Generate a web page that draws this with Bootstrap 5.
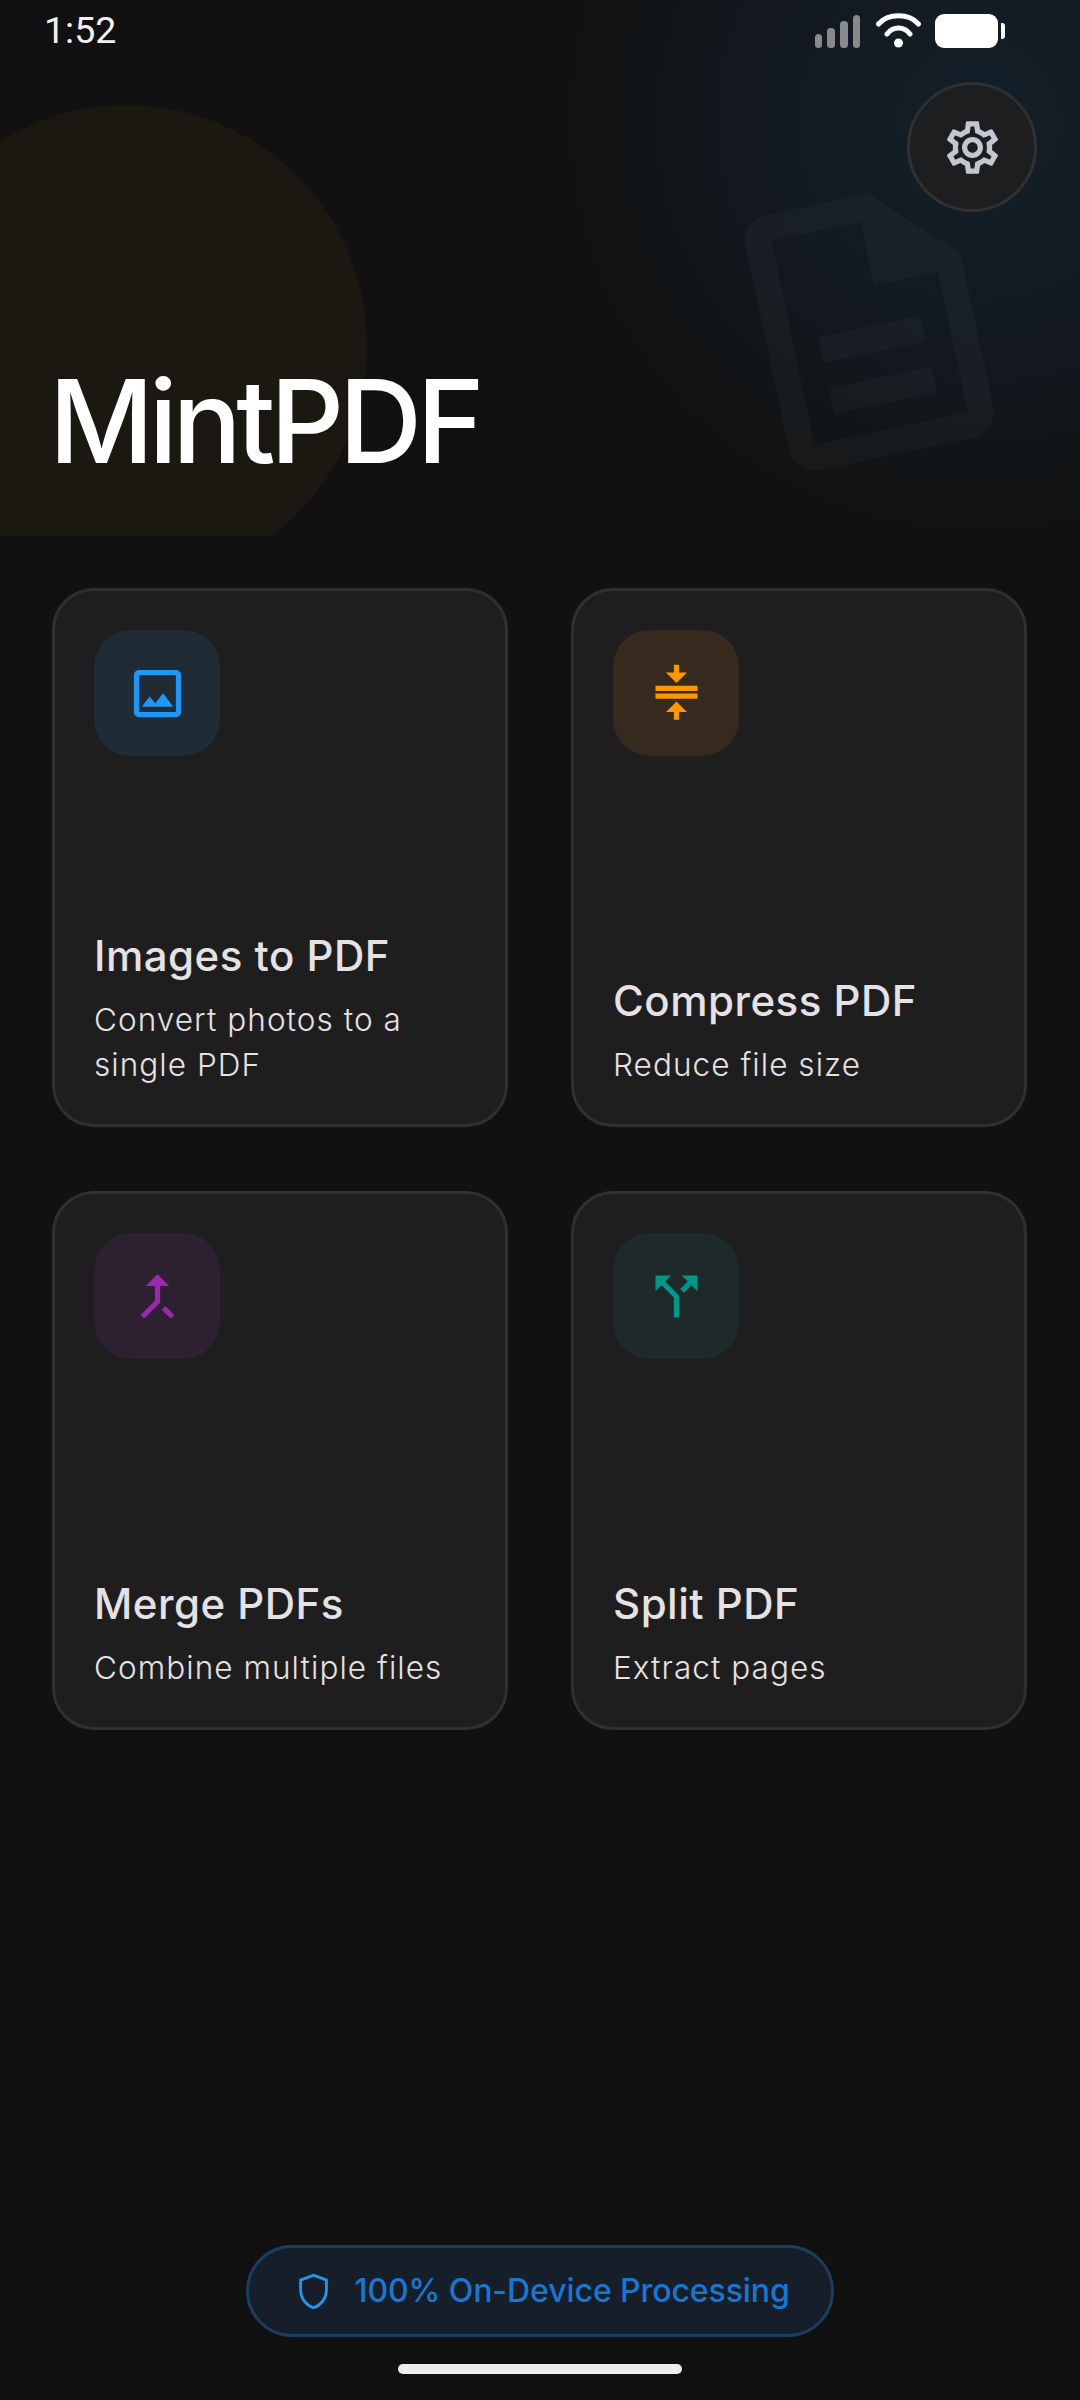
<!DOCTYPE html>
<html lang="en">
<head>
  <meta charset="UTF-8" />
  <title>MintPDF</title>
  <link href="https://cdn.jsdelivr.net/npm/bootstrap@5.3.2/dist/css/bootstrap.min.css" rel="stylesheet">
  <style>
    html, body {
      height: 100%;
      margin: 0;
      background-color: #111111;
      font-family: Inter, "Liberation Sans", sans-serif;
      color: #e6e1e5;
    }
    .screen {
      width: 1080px;
      height: 2400px;
      overflow: hidden;
    }
    .hero {
      position: relative;
      height: 536px;
      overflow: hidden;
    }
    /* background decorations */
    .hero-glow {
      position: absolute;
      left: 560px;
      top: -300px;
      width: 840px;
      height: 840px;
      border-radius: 50%;
      background: radial-gradient(circle closest-side, rgba(33,150,243,.11), rgba(33,150,243,.045) 70%, rgba(33,150,243,0));
    }
    .hero-blob {
      position: absolute;
      left: -113px;
      top: 105px;
      width: 480px;
      height: 480px;
      border-radius: 50%;
      background: rgba(255,193,7,.04);
    }
    .hero-doc {
      position: absolute;
      left: 713px;
      top: 170px;
      width: 313px;
      height: 313px;
      fill: #fff;
      opacity: .024;
      transform: rotate(-12deg);
    }
    .status-bar {
      position: relative;
      height: 82px;
      padding: 8px 75px 0 44px;
    }
    .status-time {
      font-family: Roboto, sans-serif;
      font-size: 37.5px;
      line-height: 44px;
      color: #f2f2f2;
    }
    .status-bar svg { margin-top: 1px; }
    .settings-row {
      position: relative;
      padding-right: 43px;
    }
    .settings-btn {
      width: 130px;
      height: 130px;
      padding: 0;
      background: #1c1e20;
      border: 3px solid #303030;
      border-radius: 50%;
    }
    .settings-btn svg { width: 63px; height: 63px; fill: #c4c7d0; }
    .app-title {
      position: relative;
      margin: 0 0 0 49px;
      padding-bottom: 44px;
      font-size: 115px;
      line-height: 140px;
      font-weight: 500;
      letter-spacing: -5.25px;
      color: #fff;
    }
    .tools {
      padding: 52px 53px 0 52px;
    }
    .tools .row {
      --bs-gutter-x: 63px;
      --bs-gutter-y: 64px;
    }
    .tool-card {
      height: 539px;
      padding: 39px 39px 37px;
      background: #1e1e1e;
      border: 3px solid #303030;
      border-radius: 42px;
    }
    .tool-icon {
      width: 126px;
      height: 126px;
      border-radius: 37px;
    }
    .tool-icon svg { width: 63px; height: 63px; fill: currentColor; }
    .tool-name {
      margin: 0 0 14px;
      font-size: 42px;
      line-height: 56px;
      font-weight: 500;
      letter-spacing: .5px;
      color: #e6e1e5;
    }
    .tool-desc {
      margin: 0;
      font-size: 31.5px;
      line-height: 44.500px;
      letter-spacing: 1.05px;
      font-weight: 300;
      color: #e6e1e5;
    }
    .icon-blue { background: #1f2b35; color: #2196f3; }
    .icon-orange { background: #362a1e; color: #ff9800; }
    .icon-purple { background: #2d2030; color: #9c27b0; }
    .icon-teal { background: #1e2a2a; color: #009688; }
    .privacy-pill {
      width: 588px;
      height: 92px;
      padding-left: 2px;
      background: #161f29;
      border: 3px solid #1a3e5c;
      font-size: 32px;
      font-weight: 500;
      letter-spacing: -.08px;
      color: #1976d2;
    }
    .privacy-pill svg {
      width: 43px;
      height: 43px;
      margin-right: 19px;
      fill: none;
      stroke: #2196f3;
      stroke-width: 1.6;
    }
    .home-bar {
      width: 284px;
      height: 10px;
      margin: 27px auto 26px;
      background: #eeeeee;
      border-radius: 5px;
    }
  </style>
</head>
<body>
  <div class="screen d-flex flex-column">
    <div class="hero d-flex flex-column">
      <div class="hero-glow"></div>
      <div class="hero-blob"></div>
      <svg class="hero-doc" viewBox="0 0 24 24"><path d="M8 16h8v2H8zm0-4h8v2H8zm6-10H6c-1.1 0-2 .9-2 2v16c0 1.1.89 2 1.99 2H18c1.1 0 2-.9 2-2V8l-6-6zm4 18H6V4h7v5h5v11z"/></svg>

      <div class="status-bar d-flex justify-content-between align-items-start">
        <span class="status-time">1:52</span>
        <svg width="190" height="50" viewBox="0 0 190 50">
          <g fill="#8a8a8a">
            <rect x="0" y="25" width="7" height="14" rx="3.5"/>
            <rect x="12" y="19" width="8" height="20" rx="3.5"/>
            <rect x="25" y="12" width="8" height="27" rx="3.5"/>
            <rect x="38" y="6" width="7" height="33" rx="3.5"/>
          </g>
          <g fill="none" stroke="#fff" stroke-width="5" stroke-linecap="round">
            <path d="M63.500 15 C73 4 94 4 103.500 15"/>
            <path d="M72 25 C78 17 89 17 95 25"/>
          </g>
          <circle cx="83.500" cy="34" r="4.500" fill="#fff"/>
          <rect x="120" y="5" width="63" height="34" rx="9" fill="#fff"/>
          <path d="M186 14h1c2 0 3 1 3 3v10c0 2-1 3-3 3h-1z" fill="#fff"/>
        </svg>
      </div>

      <div class="settings-row d-flex justify-content-end">
        <button class="settings-btn d-flex align-items-center justify-content-center" type="button" aria-label="Settings">
          <svg viewBox="0 0 24 24"><path d="M19.43 12.98c.04-.32.07-.64.07-.98 0-.34-.03-.66-.07-.98l2.11-1.65c.19-.15.24-.42.12-.64l-2-3.46c-.09-.16-.26-.25-.44-.25-.06 0-.12.01-.17.03l-2.49 1c-.52-.4-1.08-.73-1.69-.98l-.38-2.65C14.46 2.18 14.25 2 14 2h-4c-.25 0-.46.18-.49.42l-.38 2.65c-.61.25-1.17.59-1.69.98l-2.49-1c-.06-.02-.12-.03-.18-.03-.17 0-.34.09-.43.25l-2 3.46c-.13.22-.07.49.12.64l2.11 1.65c-.04.32-.07.65-.07.98 0 .33.03.66.07.98l-2.11 1.65c-.19.15-.24.42-.12.64l2 3.46c.09.16.26.25.44.25.06 0 .12-.01.17-.03l2.49-1c.52.4 1.08.73 1.69.98l.38 2.65c.03.24.24.42.49.42h4c.25 0 .46-.18.49-.42l.38-2.65c.61-.25 1.17-.59 1.69-.98l2.49 1c.06.02.12.03.18.03.17 0 .34-.09.43-.25l2-3.46c.12-.22.07-.49-.12-.64l-2.11-1.65zm-1.98-1.71c.04.31.05.52.05.73 0 .21-.02.43-.05.73l-.14 1.13.89.7 1.08.84-.7 1.21-1.27-.51-1.04-.42-.9.68c-.43.32-.84.56-1.25.73l-1.06.43-.16 1.13-.2 1.35h-1.4l-.19-1.35-.16-1.13-1.06-.43c-.43-.18-.83-.41-1.23-.71l-.91-.7-1.06.43-1.27.51-.7-1.21 1.08-.84.89-.7-.14-1.13c-.03-.31-.05-.54-.05-.74s.02-.43.05-.73l.14-1.13-.89-.7-1.08-.84.7-1.21 1.27.51 1.04.42.9-.68c.43-.32.84-.56 1.25-.73l1.06-.43.16-1.13.2-1.35h1.39l.19 1.35.16 1.13 1.06.43c.43.18.83.41 1.23.71l.91.7 1.06-.43 1.27-.51.7 1.21-1.07.85-.89.7.14 1.13zM12 8c-2.21 0-4 1.79-4 4s1.79 4 4 4 4-1.79 4-4-1.79-4-4-4zm0 6c-1.1 0-2-.9-2-2s.9-2 2-2 2 .9 2 2-.9 2-2 2z"/></svg>
        </button>
      </div>

      <h1 class="app-title mt-auto">MintPDF</h1>
    </div>

    <div class="tools">
      <div class="row">
        <div class="col-6">
          <div class="tool-card d-flex flex-column justify-content-between">
            <div class="tool-icon icon-blue d-flex align-items-center justify-content-center">
              <svg viewBox="0 0 24 24"><path d="M19 5v14H5V5h14m0-2H5c-1.1 0-2 .9-2 2v14c0 1.100.9 2 2 2h14c1.100 0 2-.9 2-2V5c0-1.100-.9-2-2-2zm-4.860 8.860l-3 3.870L9 13.140 6 17h12l-3.860-5.140z"/></svg>
            </div>
            <div>
              <h2 class="tool-name">Images to PDF</h2>
              <p class="tool-desc">Convert photos to a single PDF</p>
            </div>
          </div>
        </div>
        <div class="col-6">
          <div class="tool-card d-flex flex-column justify-content-between">
            <div class="tool-icon icon-orange d-flex align-items-center justify-content-center">
              <svg viewBox="0 0 24 24"><path d="M8 19h3v3h2v-3h3l-4-4-4 4zm8-15h-3V1h-2v3H8l4 4 4-4zM4 9v2h16V9H4zm0 3h16v2H4v-2z"/></svg>
            </div>
            <div>
              <h2 class="tool-name">Compress PDF</h2>
              <p class="tool-desc">Reduce file size</p>
            </div>
          </div>
        </div>
        <div class="col-6">
          <div class="tool-card d-flex flex-column justify-content-between">
            <div class="tool-icon icon-purple d-flex align-items-center justify-content-center">
              <svg viewBox="0 0 24 24"><path d="M17 20.410L18.410 19 15 15.590 13.590 17 17 20.410zM7.500 8H11v5.590L5.590 19 7 20.410l6-6V8h3.500L12 3.500 7.500 8z"/></svg>
            </div>
            <div>
              <h2 class="tool-name">Merge PDFs</h2>
              <p class="tool-desc">Combine multiple files</p>
            </div>
          </div>
        </div>
        <div class="col-6">
          <div class="tool-card d-flex flex-column justify-content-between">
            <div class="tool-icon icon-teal d-flex align-items-center justify-content-center">
              <svg viewBox="0 0 24 24"><path d="M14 4l2.290 2.290-2.880 2.880 1.420 1.420 2.880-2.880L20 10V4h-6zm-4 0H4v6l2.290-2.290 4.710 4.700V20h2v-8.410l-5.290-5.300L10 4z"/></svg>
            </div>
            <div>
              <h2 class="tool-name">Split PDF</h2>
              <p class="tool-desc">Extract pages</p>
            </div>
          </div>
        </div>
      </div>
    </div>

    <div class="mt-auto">
      <div class="privacy-pill d-flex align-items-center justify-content-center rounded-pill mx-auto">
        <svg viewBox="0 0 24 24"><path d="M12 2.900 19.200 5.600V11C19.200 15.800 16 19.900 12 21 8 19.900 4.800 15.800 4.800 11V5.600Z"/></svg>
        <span>100% On-Device Processing</span>
      </div>
      <div class="home-bar"></div>
    </div>
  </div>
  <script src="https://cdn.jsdelivr.net/npm/bootstrap@5.3.2/dist/js/bootstrap.bundle.min.js"></script>
</body>
</html>
